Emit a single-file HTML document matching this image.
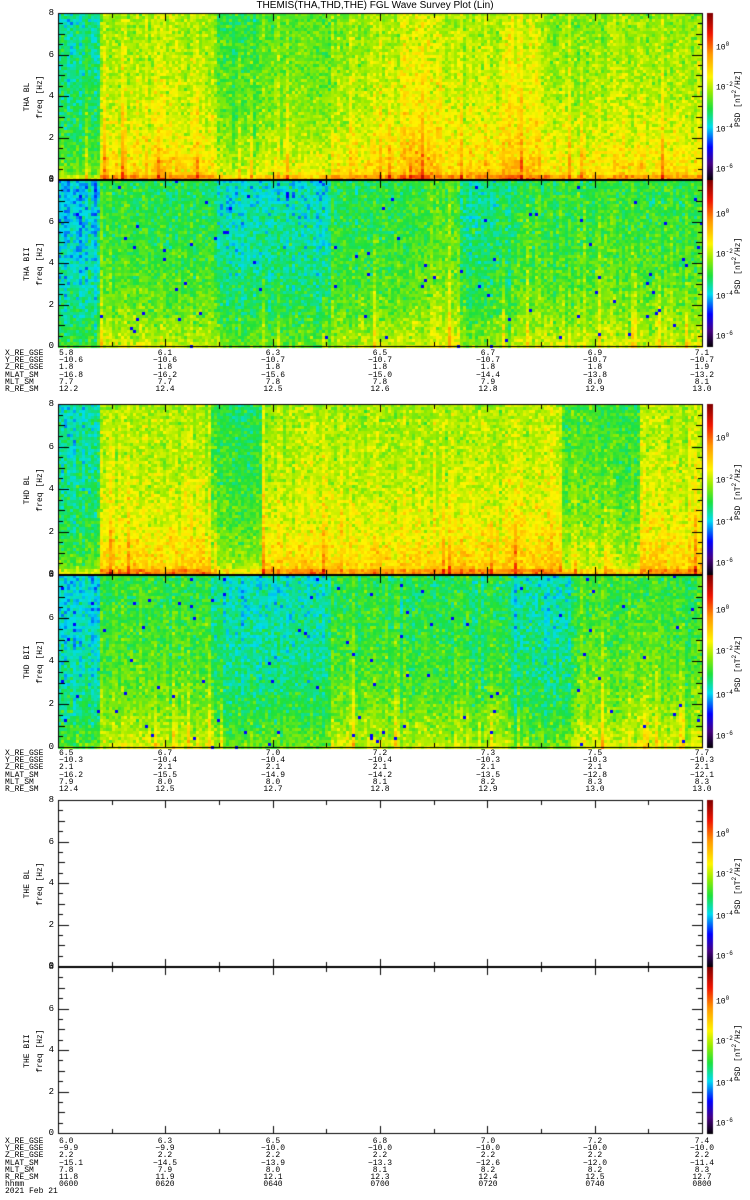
<!DOCTYPE html>
<html><head><meta charset="utf-8"><style>
body{margin:0;background:#fff;width:750px;height:1200px;overflow:hidden;position:relative;font-family:"Liberation Mono","DejaVu Sans Mono",monospace;color:#000}
canvas{position:absolute;left:0;top:0}
.t{position:absolute;font-size:8px;line-height:8px;white-space:pre}
.r{position:absolute;font-size:8px;line-height:8px;white-space:nowrap;transform:rotate(-90deg);transform-origin:center}
</style></head><body>
<canvas id="c" width="750" height="1200"></canvas>
<div class="t" style="left:0;width:750px;text-align:center;top:1px;font-family:'Liberation Sans',sans-serif;font-size:10px;line-height:10px">THEMIS(THA,THD,THE) FGL Wave Survey Plot (Lin)</div>
<div id="txt"></div>
<script>
var cv=document.getElementById('c'),g=cv.getContext('2d');
var s=987654321;function rnd(){s^=s<<13;s>>>=0;s^=s>>>17;s^=s<<5;s>>>=0;return s/4294967296;}
function nrm(){return (rnd()+rnd()+rnd()-1.5)/1.5;}
var stops=[[0,[0,0,0]],[0.1,[70,0,130]],[0.2,[0,0,255]],[0.32,[0,220,240]],[0.43,[30,225,60]],[0.53,[150,235,0]],[0.62,[255,245,0]],[0.76,[255,150,0]],[0.88,[240,20,0]],[1,[130,0,0]]];
function cm(v){v=Math.max(0,Math.min(1,v));for(var i=1;i<stops.length;i++){if(v<=stops[i][0]){var a=stops[i-1],b=stops[i],t=(v-a[0])/(b[0]-a[0]);return 'rgb('+[0,1,2].map(function(k){return Math.round(a[1][k]+(b[1][k]-a[1][k])*t)}).join(',')+')';}}}
var X0=58,X1=703;
var panels=[[13,180,1,[[58,.4],[100,.58],[215,.48],[260,.52],[330,.57],[400,.62],[440,.58],[500,.62],[540,.56],[640,.56]]],
[180,347,0,[[58,.35],[100,.46],[215,.38],[330,.45],[410,.49],[460,.41],[510,.47]]],
[404,575,1,[[58,.4],[100,.58],[210,.47],[260,.58],[410,.58],[500,.6],[560,.48],[640,.59]]],
[575,748,0,[[58,.36],[100,.47],[210,.39],[330,.47],[400,.45],[510,.39],[570,.48]]],
[800,967,2],[967,1134,2]];
function base(p,x){var v=p[0][1];for(var i=0;i<p.length;i++)if(x>=p[i][0])v=p[i][1];return v;}
panels.forEach(function(P){
 var y0=P[0],y1=P[1],h=y1-y0;
 if(P[2]!==2){
  for(var x=X0;x<X1;x+=3){var cj=nrm()*0.05;var st=rnd()<0.07?0.12:0;var b=base(P[3],x)+cj;
   for(var y=y0;y<y1;y+=3){var f=(y1-y)/h;var v=b+0.12*Math.exp(-f*4)+st*Math.exp(-f*2)+nrm()*0.11-0.04*f;
    if(P[2]==1&&y1-y<8)v+=0.07;if(P[2]==0&&rnd()<0.006)v=0.2;
    g.fillStyle=cm(v);g.fillRect(x,y,3,3);}}
 }
 g.fillStyle='#000';
 g.fillRect(X0,y0,X1-X0,1);g.fillRect(X0,y1-1,X1-X0,1);g.fillRect(X0,y0,1,h);g.fillRect(X1-1,y0,1,h);
 for(var i=0;i<=16;i++){var yy=Math.round(y1-1-i*(h-1)/16);var L;if(i%4==0)L=11;else if(i%2==0)L=7;else L=5;
  g.fillRect(X0,yy,L,1);g.fillRect(X1-L,yy,L,1);}
 for(var j=0;j<=12;j++){var xx=Math.round(X0+j*(X1-X0-1)/12);var L=j%2==0?8:5;g.fillRect(xx,y0,1,L);g.fillRect(xx,y1-L,1,L);}
 for(var y=y0;y<y1;y++){g.fillStyle=cm(1-(y-y0)/h);g.fillRect(707,y,6,1);}
});
var names=['THA BL','THA BII','THD BL','THD BII','THE BL','THE BII'];
var H='';
panels.forEach(function(P,k){var y0=P[0],y1=P[1],h=y1-y0,m=(y0+y1)/2;
 for(var i=0;i<=4;i++){var yy=y1-1-i*(h-1)/4;H+='<div class="t" style="left:44px;width:10px;text-align:right;top:'+(yy-4)+'px;font-size:9px">'+(2*i)+'</div>';}
 H+='<div class="r" style="left:-2px;width:60px;text-align:center;top:'+(m-4)+'px">'+names[k]+'</div>';
 H+='<div class="r" style="left:11px;width:60px;text-align:center;top:'+(m-4)+'px">freq [Hz]</div>';
 var ls=['10<sup style="font-size:6px">0</sup>','10<sup style="font-size:6px">-2</sup>','10<sup style="font-size:6px">-4</sup>','10<sup style="font-size:6px">-6</sup>'],yf=[0.19,0.43,0.68,0.92];
 for(var i=0;i<4;i++)H+='<div class="t" style="left:716px;top:'+(y0+h*yf[i]-4)+'px;font-size:8px">'+ls[i]+'</div>';
 H+='<div class="r" style="left:707px;width:60px;text-align:center;top:'+(m-4)+'px">PSD [nT<sup style="font-size:6px">2</sup>/Hz]</div>';
});
var xs=[58,165,273,380,488,595,702];
var groups=[[350,[['X_RE_GSE','5.8 6.1 6.3 6.5 6.7 6.9 7.1'],['Y_RE_GSE','-10.6 -10.6 -10.7 -10.7 -10.7 -10.7 -10.7'],['Z_RE_GSE','1.8 1.8 1.8 1.8 1.8 1.8 1.9'],['MLAT_SM','-16.8 -16.2 -15.6 -15.0 -14.4 -13.8 -13.2'],['MLT_SM','7.7 7.7 7.8 7.8 7.9 8.0 8.1'],['R_RE_SM','12.2 12.4 12.5 12.6 12.8 12.9 13.0']]],
[750,[['X_RE_GSE','6.5 6.7 7.0 7.2 7.3 7.5 7.7'],['Y_RE_GSE','-10.3 -10.4 -10.4 -10.4 -10.3 -10.3 -10.3'],['Z_RE_GSE','2.1 2.1 2.1 2.1 2.1 2.1 2.1'],['MLAT_SM','-16.2 -15.5 -14.9 -14.2 -13.5 -12.8 -12.1'],['MLT_SM','7.9 8.0 8.0 8.1 8.2 8.3 8.3'],['R_RE_SM','12.4 12.5 12.7 12.8 12.9 13.0 13.0']]],
[1138,[['X_RE_GSE','6.0 6.3 6.5 6.8 7.0 7.2 7.4'],['Y_RE_GSE','-9.9 -9.9 -10.0 -10.0 -10.0 -10.0 -10.0'],['Z_RE_GSE','2.2 2.2 2.2 2.2 2.2 2.2 2.2'],['MLAT_SM','-15.1 -14.5 -13.9 -13.3 -12.6 -12.0 -11.4'],['MLT_SM','7.8 7.9 8.0 8.1 8.2 8.2 8.3'],['R_RE_SM','11.8 11.9 12.1 12.3 12.4 12.5 12.7'],['hhmm','0600 0620 0640 0700 0720 0740 0800']]]];
groups.forEach(function(G){G[1].forEach(function(r,i){var y=G[0]+i*7.2;
 H+='<div class="t" style="left:5px;top:'+y+'px">'+r[0]+'</div>';
 r[1].split(' ').forEach(function(v,j){var x=j==0?xs[0]+1:xs[j]-20;var al=j==0?'left':'center';H+='<div class="t" style="left:'+x+'px;width:40px;text-align:'+al+';top:'+y+'px">'+v.replace('-','&minus;')+'</div>';});});});
H+='<div class="t" style="left:5px;top:1188px">2021 Feb 21</div>';
document.getElementById('txt').innerHTML=H;
</script>
</body></html>
